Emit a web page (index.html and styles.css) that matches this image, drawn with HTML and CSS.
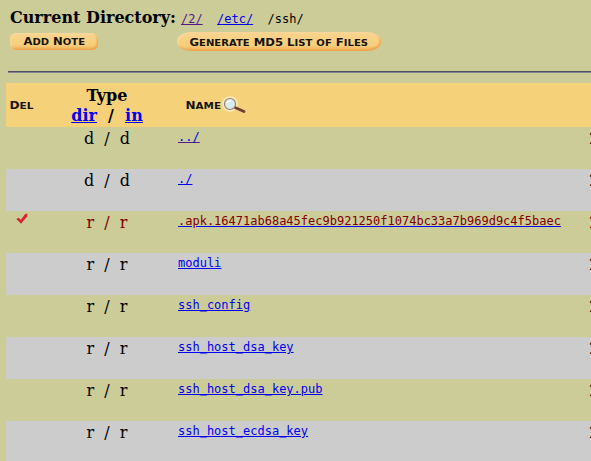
FILE: index.html
```html
<!DOCTYPE html>
<html lang="en">
<head>
<meta charset="utf-8">
<title>Current Directory</title>
<link rel="stylesheet" href="styles.css">
</head>
<body>
<header class="top">
  <div class="path"><b>Current Directory:</b><span class="crumbs"><a class="visited" href="#">/2/</a><a href="#">/etc/</a><span>/ssh/</span></span></div>
  <div class="actions">
    <button class="btn note"><svg width="88" height="17"><text class="caps" x="13.5" y="12" textLength="61.5" lengthAdjust="spacingAndGlyphs">A<tspan class="sm">DD</tspan> N<tspan class="sm">OTE</tspan></text></svg></button>
    <button class="btn md5"><svg width="204" height="19"><text class="caps" x="12.5" y="13.5" textLength="178.5" lengthAdjust="spacingAndGlyphs">G<tspan class="sm">ENERATE</tspan> MD5 L<tspan class="sm">IST</tspan> <tspan class="sm">OF</tspan> F<tspan class="sm">ILES</tspan></text></svg></button>
  </div>
</header>
<hr class="rule">
<main class="list">
  <div class="row head">
    <div class="del"><svg width="30" height="20"><text class="caps" x="3.5" y="14.5" textLength="24" lengthAdjust="spacingAndGlyphs">D<tspan class="sm">EL</tspan></text></svg></div>
    <div class="type">Type<br><a href="#">dir</a>&nbsp; / &nbsp;<a href="#">in</a></div>
    <div class="name"><svg width="74" height="24">
      <text class="caps" x="7.5" y="14.7" textLength="35.5" lengthAdjust="spacingAndGlyphs">N<tspan class="sm">AME</tspan></text>
      <circle cx="52" cy="10" r="8" fill="#fae5ae"/>
      <path d="M57 13.5L66 17.5" stroke="#713b36" stroke-width="2.7" stroke-linecap="round"/>
      <circle cx="52" cy="10" r="5.5" fill="#d7edf0" stroke="#9b8178" stroke-width="1.2"/>
      <path d="M48.8 9Q50 6.5 53 6.7" fill="none" stroke="#f7ffff" stroke-width="1.5"/>
    </svg></div>
    <div class="date"></div>
  </div>
  <div class="row"><div class="del"></div><div class="type">d&nbsp; / &nbsp;d</div><div class="name"><a class="seen" href="#">../</a></div><div class="date">2</div></div>
  <div class="row alt"><div class="del"></div><div class="type">d&nbsp; / &nbsp;d</div><div class="name"><a href="#">./</a></div><div class="date">2</div></div>
  <div class="row deleted"><div class="del"><svg class="check" width="12" height="12"><path d="M.3 6L2.7 4.7L4.8 6.8L9.2 1L11.4.5L11.2 3.5L5 10.8Z" fill="#d52535"/></svg></div><div class="type">r&nbsp; / &nbsp;r</div><div class="name"><a href="#">.apk.16471ab68a45fec9b921250f1074bc33a7b969d9c4f5baec</a></div><div class="date">2</div></div>
  <div class="row alt"><div class="del"></div><div class="type">r&nbsp; / &nbsp;r</div><div class="name"><a href="#">moduli</a></div><div class="date">2</div></div>
  <div class="row"><div class="del"></div><div class="type">r&nbsp; / &nbsp;r</div><div class="name"><a href="#">ssh_config</a></div><div class="date">2</div></div>
  <div class="row alt"><div class="del"></div><div class="type">r&nbsp; / &nbsp;r</div><div class="name"><a href="#">ssh_host_dsa_key</a></div><div class="date">2</div></div>
  <div class="row"><div class="del"></div><div class="type">r&nbsp; / &nbsp;r</div><div class="name"><a href="#">ssh_host_dsa_key.pub</a></div><div class="date">2</div></div>
  <div class="row alt"><div class="del"></div><div class="type">r&nbsp; / &nbsp;r</div><div class="name"><a href="#">ssh_host_ecdsa_key</a></div><div class="date">2</div></div>
</main>
</body>
</html>
```
FILE: styles.css
```css
body {
  margin: 0;
  height: 461px;
  overflow: hidden;
  background: #cccc99;
  color: #000;
  font: 16px/20px "DejaVu Serif", serif;
}
a { color: #0000ee; }
svg { display: block; }
.top { padding: 8px 0 0 10px; }
.path { display: flex; height: 24px; }
.crumbs {
  display: flex;
  gap: 14.4px;
  margin-left: 5px;
  font: 12px/22px "DejaVu Sans Mono", monospace;
}
.visited { color: #551a8b; }
.actions { display: flex; gap: 79px; height: 39px; }
.btn {
  flex: none;
  padding: 0;
  border: 0;
  background: linear-gradient(#f8d48e, #f7cf7b 70%, #f0ae57);
  box-shadow: inset 1px 1px 2px #fad9a0, inset -1px -1px 2px #ef9c43;
}
.note { width: 88px; height: 17px; margin-top: 1px; border-radius: 6px; }
.md5 { width: 204px; height: 19px; border-radius: 14px / 9px; }
.caps { font: bold 11px "DejaVu Sans", sans-serif; fill: #17130d; }
.sm { font-size: 9.5px; }
.rule {
  height: 1px;
  margin: 0 0 0 8px;
  border: 0;
  border-top: 1px solid #50505a;
  background: #85858d;
}
.list { margin: 10px 0 0 6px; }
.row {
  display: grid;
  grid-template-columns: 30px 142px 411px 20px;
  height: 42px;
}
.alt { background: #cccccc; }
.head { height: 44px; background: #f5d27a; font-weight: bold; }
.type { padding-top: 2px; text-align: center; }
.head .type { padding-top: 3px; }
.name { font: 12px/20px "DejaVu Sans Mono", monospace; }
.head .name, .head .del { padding-top: 11px; }
.check { margin: 2px 0 0 10px; }
.date { padding-top: 2px; }
.deleted, .deleted a { color: #800000; }
.deleted a { text-decoration-color: #0000ee; }
.seen { text-decoration-color: #551a8b; }
```
